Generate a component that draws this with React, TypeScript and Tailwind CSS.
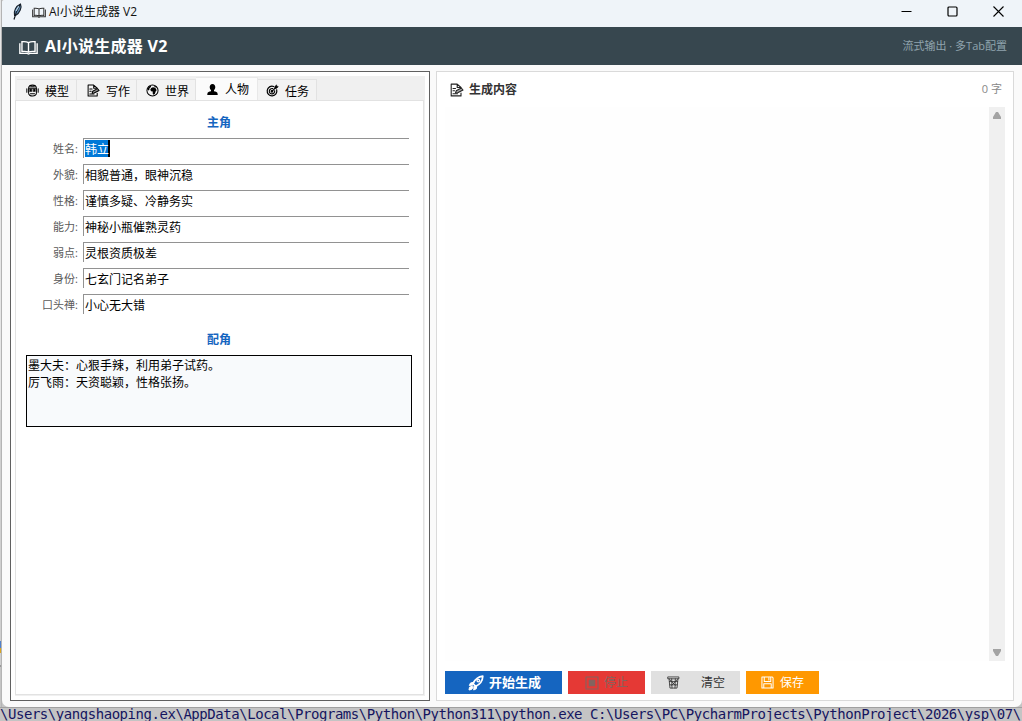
import type { ReactNode } from 'react';

const sans = "font-['Open_Sans','Noto_Sans_CJK_SC',sans-serif]";
const cjk = "font-['Noto_Sans_CJK_SC',sans-serif]";

type IconProps = { className?: string };

function Svg({ className, children, box = 14 }: IconProps & { children: ReactNode; box?: number }) {
  return (
    <svg viewBox={`0 0 ${box} ${box}`} className={className} fill="none" stroke="currentColor" strokeWidth="1.1" strokeLinecap="round" strokeLinejoin="round">
      {children}
    </svg>
  );
}

function Feather() {
  return (
    <svg viewBox="0 0 12 18" className="h-[18px] w-3 shrink-0" fill="none">
      <path d="M2.500 12.500C1.500 8 4 3 8.500 1c1.500 3-.5 9-5 11.500z" fill="#5d87ad" stroke="#17202b" strokeWidth="1.1" />
      <path d="M8.300 1.500C6 5 3.500 10 2 16.500" stroke="#111820" strokeWidth="1.200" />
      <path d="M4 8 6.800 3.200" stroke="#bcd9f0" strokeWidth="1.200" />
    </svg>
  );
}

function Book({ className }: IconProps) {
  return (
    <svg viewBox="0 0 18 14" className={className} fill="none" stroke="currentColor" strokeWidth="1.300">
      <path d="M9 2.300C7.500 1.500 4.800 1.300 2.800 1.500v9.300c2-.2 4.700-.1 6.200.6 1.500-.7 4.200-.8 6.200-.6V1.500c-2-.2-4.700 0-6.200.8zM9 2.300v9.100" />
      <path d="M.8 3v9.600h7l1.200.6 1.200-.6h7V3" />
    </svg>
  );
}

function Robot({ className }: IconProps) {
  return (
    <Svg className={className}>
      <path d="M2.800 4.300C3 2.300 4.500 1.200 7 1.200s4 1.100 4.200 3.100v5.500c0 2-1.700 3.200-4.200 3.200s-4.200-1.200-4.200-3.200zM2.800 4.500h8.400M.9 5v4M13.100 5v4" />
      <rect x="4" y="5.500" width="2.200" height="2.600" fill="currentColor" strokeWidth=".5" />
      <rect x="7.800" y="5.500" width="2.200" height="2.600" fill="currentColor" strokeWidth=".5" />
      <path d="M4.800 10.500h4.400M5 3h4" />
    </Svg>
  );
}

function Memo({ className }: IconProps) {
  return (
    <Svg className={className}>
      <path d="M11 10v2.900H1.200V1.100h6L11 4.500M7.200 1.100v3.400H11M3 5.500h2.500M3 7.800h1.500M3 10.700h4.500" />
      <path d="m5.500 10 .7-2.200L11.300 5l1.700 2-5.300 2.700z" fill="currentColor" fillOpacity=".4" />
    </Svg>
  );
}

function Globe({ className }: IconProps) {
  return (
    <Svg className={className}>
      <circle cx="7" cy="7" r="6" />
      <path d="M1.500 5.500 3.200 2.700l2.300-1-.2 1.500-1.500 1.500-.3 1.800L2.500 7zM5.600 4.200l1.900-.7L10 4l1.500 2.600-1 1.200-1 3-1.500.8-.8-1.500.1-1.900-1.800-.5-.9-1.500zM8.300 1.500l2.200.8L12 4.300l-1.300-.6-1.800-.9z" fill="currentColor" stroke="none" />
    </Svg>
  );
}

function Person({ className }: IconProps) {
  return (
    <svg viewBox="0 0 14 14" className={className} fill="currentColor">
      <path d="M7 1c2 0 3 1.400 3 3.400 0 1.500-.5 2.700-1.400 3.400v1.100c1.900.4 4 .9 4 3.100v.8H1.400V12c0-2.200 2.100-2.700 4-3.100V7.800C4.500 7.100 4 5.900 4 4.400 4 2.400 5 1 7 1z" />
    </svg>
  );
}

function Target({ className }: IconProps) {
  return (
    <Svg className={className}>
      <path d="M8.300 2.700a5.200 5.200 0 1 0 3.200 3.500" strokeWidth="1.300" />
      <path d="M7.300 5a2.900 2.900 0 1 0 2 2.200" strokeWidth="1.200" />
      <path d="m6.400 7.900 4-4" strokeWidth="1.300" />
      <path d="M9.500 4.500V2.800L11.400 1l.3 1.600 1.500.3-1.800 1.800z" fill="currentColor" strokeWidth=".7" />
      <circle cx="6.400" cy="7.900" r=".9" fill="currentColor" />
    </Svg>
  );
}

function Rocket({ className }: IconProps) {
  return (
    <Svg className={className} box={16}>
      <path d="M5 8.500C7 4.500 10 1.800 14.800 1.200 14.600 6 11.500 9.500 7.700 11.300z" strokeWidth="1.700" />
      <circle cx="10.300" cy="5.600" r="1.300" strokeWidth="1.300" />
      <path d="M5.500 7.300 2.500 8 1.300 10.500l3.400-.5zM8.800 10.800l-.5 3-2.600 1.200.4-3.400zM4.300 11.200l-2.800 1-.5 2.800 2.600-.6 1.500-2z" fill="currentColor" strokeWidth="1" />
    </Svg>
  );
}

function Stop({ className }: IconProps) {
  return (
    <Svg className={className}>
      <rect x="1" y="1" width="12" height="12" />
      <rect x="4.300" y="4.300" width="5.400" height="5.400" fill="currentColor" />
    </Svg>
  );
}

function Trash({ className }: IconProps) {
  return (
    <Svg className={className}>
      <path d="M1.200 1h11.600v2H1.200zM2.200 3l1 10h7.600l1-10M2.600 6h8.800M3 9.500h8M5 3l.4 10M9 3l-.4 10M3 4l6 6M11 4l-6 6" strokeWidth=".9" />
    </Svg>
  );
}

function Floppy({ className }: IconProps) {
  return (
    <Svg className={className}>
      <path d="M1 1h11l1 1v11H1zM3.500 1v5h7V1M3 13V8.300h8V13M8.500 2.200v2.200" />
    </Svg>
  );
}

const tabs = [
  { label: '模型', Icon: Robot, cls: 'w-[60px] pl-[9px]' },
  { label: '写作', Icon: Memo, cls: 'w-[60px] pl-[10px]' },
  { label: '世界', Icon: Globe, cls: 'w-[59px] pl-[9px]' },
  { label: '人物', Icon: Person, active: true, cls: 'w-[62px] pl-[10px]' },
  { label: '任务', Icon: Target, cls: 'w-[59px] pl-[8px]' },
];

const fields = [
  ['姓名', '韩立'],
  ['外貌', '相貌普通，眼神沉稳'],
  ['性格', '谨慎多疑、冷静务实'],
  ['能力', '神秘小瓶催熟灵药'],
  ['弱点', '灵根资质极差'],
  ['身份', '七玄门记名弟子'],
  ['口头禅', '小心无大错'],
];

function TitleBar() {
  return (
    <div className="flex h-[27px] shrink-0 items-start bg-[#eff4f9] pl-[10px]">
      <div className="flex h-[23px] items-center">
        <Feather />
        <Book className="ml-[8px] mt-[2px] h-[11px] w-[14px] text-[#333]" />
        <span className="ml-[3px] whitespace-nowrap text-[12px] text-[#111]">AI小说生成器 V2</span>
      </div>
      <div className="ml-auto flex h-[23px] items-center gap-[35px] pr-[18px] text-black">
        <svg viewBox="0 0 11 11" className="h-[11px] w-[11px]" stroke="currentColor"><path d="M.5 5.500h10" /></svg>
        <svg viewBox="0 0 11 11" className="h-[11px] w-[11px]" stroke="currentColor" fill="none"><rect x="1" y="1" width="9" height="9" rx="1" strokeWidth="1.200" /></svg>
        <svg viewBox="0 0 11 11" className="h-[11px] w-[11px]" stroke="currentColor"><path d="m.5.5 10 10m0-10-10 10" strokeWidth="1.100" /></svg>
      </div>
    </div>
  );
}

function Header() {
  return (
    <div className="flex h-[38px] shrink-0 items-center bg-[#37474f] pl-[17px] pr-[15px]">
      <Book className="mt-[2px] h-[15px] w-[19px] text-white" />
      <span className="ml-[7px] whitespace-nowrap text-[16px] font-bold tracking-[0.25px] text-white">AI小说生成器 V2</span>
      <span className="ml-auto whitespace-nowrap text-[11px] text-[#90a4ae]">流式输出 · 多Tab配置</span>
    </div>
  );
}

function LeftPanel() {
  return (
    <div className="flex w-[420px] shrink-0 flex-col border border-[#606060] bg-white p-1">
      <div className="flex min-h-0 flex-1 flex-col bg-[#f0f0f0] pb-[1px] pr-[1px]">
        <div className="flex h-[24px] shrink-0 items-end pl-[2px]">
          {tabs.map(({ label, Icon, active, cls }) => (
            <div
              key={label}
              className={`flex items-center gap-[6px] border-r border-t ${cls} ${
                active ? '-mb-px h-[24px] border-[#e8e8e8] bg-[#fbfbfb] pb-[1px]' : 'h-[21px] border-[#e2e2e2] bg-[#f3f3f3] pt-px'
              }`}
            >
              <Icon className="h-[13px] w-[13px] shrink-0 text-black" />
              <span className={`whitespace-nowrap text-[12px] leading-[18px] text-black ${cjk}`}>{label}</span>
            </div>
          ))}
        </div>
        <div className="flex flex-1 flex-col border border-[#e2e2e2] bg-white pl-[10px] pr-[11px] pt-[12px]">
          <h2 className={`text-center text-[12px] font-bold leading-[18px] text-[#1565c0] ${cjk}`}>主角</h2>
          <div className="mt-[7px] flex flex-col gap-[6px] pr-[3px]">
            {fields.map(([label, value], i) => (
              <div key={label} className="flex h-[20px]">
                <label className="w-[52px] pt-px text-right text-[11px] leading-[20px] text-[#5a5a5a]">{label}:</label>
                <div className="ml-[5px] flex flex-1 border-l border-t border-[#929292] pl-px pt-px">
                  <span
                    className={`h-[17px] whitespace-nowrap text-[12px] leading-[17px] ${cjk} ${
                      i === 0 ? 'w-[25px] border-r-2 border-black bg-[#0078d7] text-white' : 'text-black'
                    }`}
                  >
                    {value}
                  </span>
                </div>
              </div>
            ))}
          </div>
          <h2 className={`mt-[16px] text-center text-[12px] font-bold leading-[18px] text-[#1565c0] ${cjk}`}>配角</h2>
          <div className={`mt-[7px] h-[72px] border border-black bg-[#f8fafc] px-px text-[12px] leading-[17px] text-black ${cjk}`}>
            <p>墨大夫：心狠手辣，利用弟子试药。</p>
            <p>厉飞雨：天资聪颖，性格张扬。</p>
          </div>
        </div>
      </div>
    </div>
  );
}

function RightPanel() {
  return (
    <div className="flex w-[578px] shrink-0 flex-col border border-[#dadada] bg-white pl-[8px] pr-[8px]">
      <div className="flex h-[35px] shrink-0 items-center pl-[5px] pr-[3px]">
        <Memo className="h-[14px] w-[14px] text-[#222]" />
        <span className={`ml-[5px] pb-px text-[12px] font-bold text-[#333] ${cjk}`}>生成内容</span>
        <span className="ml-auto text-[11px] text-[#888]">0 字</span>
      </div>
      <div className="flex h-[554px] bg-[#fefefe]">
        <div className="flex-1" />
        <div className="flex w-[16px] flex-col items-center justify-between bg-[#f0f0f0] py-[5px] text-[#a3a3a3]">
          <svg viewBox="0 0 8 7" className="h-[7px] w-[8px]" fill="currentColor"><path d="M3 0h2l3 5v2H0V5z" /></svg>
          <svg viewBox="0 0 8 7" className="h-[7px] w-[8px]" fill="currentColor"><path d="M3 7h2l3-5V0H0v2z" /></svg>
        </div>
      </div>
      <div className={`mt-[10px] flex h-[23px] gap-[6px] text-[12px] ${cjk}`}>
        <button className="flex w-[117px] items-center bg-[#1565c0] pl-[23px] text-[13px] font-bold text-white">
          <Rocket className="h-[16px] w-[16px]" />
          <span className="ml-[5px] whitespace-nowrap pb-px">开始生成</span>
        </button>
        <button className="flex w-[77px] items-center bg-[#e53935] pl-[17px] text-[#83645f]">
          <Stop className="h-[14px] w-[14px]" />
          <span className="ml-[5px] whitespace-nowrap pb-px">停止</span>
        </button>
        <button className="flex w-[89px] items-center bg-[#e0e0e0] pl-[16px] text-[#333]">
          <Trash className="h-[13px] w-[13px]" />
          <span className="ml-[21px] whitespace-nowrap pb-px">清空</span>
        </button>
        <button className="flex w-[73px] items-center bg-[#ff9800] pl-[15px] text-white">
          <Floppy className="h-[13px] w-[13px]" />
          <span className="ml-[6px] whitespace-nowrap pb-px">保存</span>
        </button>
      </div>
    </div>
  );
}

export default function App() {
  return (
    <div className={`flex h-[721px] w-[1022px] flex-col overflow-hidden bg-[#c4c4c4] ${sans}`}>
      <div className="flex h-[707px] shrink-0">
        <div className="flex w-[2px] shrink-0 flex-col border-r border-[#b4b4b4]">
          <div className="h-[410px] bg-[#e6e6e6]" />
          <div className="h-[231px] bg-[#cfcfcf]" />
          <div className="h-[7px] bg-[#4f7fcb]" />
          <div className="h-[5px] bg-[#d9a520]" />
          <div className="h-[12px] bg-[#d0d0d0]" />
          <div className="h-[2px] bg-[#999]" />
        </div>
        <div className="flex flex-1 flex-col overflow-hidden rounded-b-[7px] rounded-tl-[3px] bg-[#fafafa]">
          <TitleBar />
          <Header />
          <div className="flex flex-1 gap-[6px] pb-[6px] pl-[8px] pt-[6px]">
            <LeftPanel />
            <RightPanel />
          </div>
        </div>
      </div>
      <div className="h-[14px] shrink-0 overflow-hidden whitespace-pre border-t border-[#a0a0a0] bg-[#c4c4c4] font-['DejaVu_Sans_Mono',monospace] text-[14px] leading-[13px] tracking-[-0.455px] text-[#15155f]">
        {'\\Users\\yangshaoping.ex\\AppData\\Local\\Programs\\Python\\Python311\\python.exe C:\\Users\\PC\\PycharmProjects\\PythonProject\\2026\\ysp\\07\\'}
      </div>
    </div>
  );
}
